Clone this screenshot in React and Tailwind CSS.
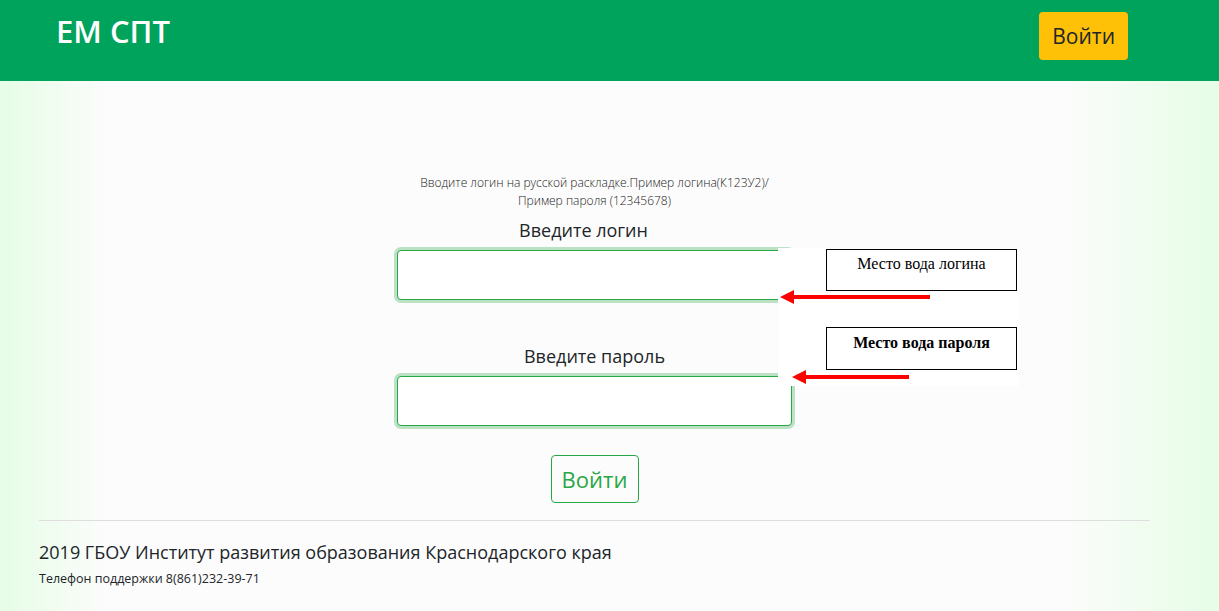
import React from 'react';

const Annotation = () => (
  <div className="absolute left-[778px] top-[248px] w-[241px] h-[138px] bg-white">
    <div className="absolute left-[48px] top-[1px] w-[191px] h-[42px] border border-black flex justify-center pt-[6px] text-[16px] leading-none text-black font-['Liberation_Serif',serif]">
      Место вода логина
    </div>
    <div className="absolute left-[48px] top-[79px] w-[191px] h-[43px] border border-black flex justify-center pt-[7px] text-[16px] leading-none font-bold text-black font-['Liberation_Serif',serif]">
      Место вода пароля
    </div>
    <svg className="absolute left-0 top-0" width="241" height="138" viewBox="0 0 241 138">
      <line x1="152" y1="49" x2="14" y2="49" stroke="#ff0000" strokeWidth="4" />
      <polygon points="2,49 16,42 16,56" fill="#ff0000" />
      <line x1="131" y1="129" x2="26" y2="129" stroke="#ff0000" strokeWidth="4" />
      <polygon points="14,129 28,122 28,136" fill="#ff0000" />
    </svg>
  </div>
);

export default function App() {
  return (
    <div className="relative min-h-[611px] font-['Open_Sans',sans-serif] text-[#212529] bg-[linear-gradient(to_right,#e6fde6_0%,#fcfcfc_9%,#fcfcfc_87%,#e6fde6_100%)]">
      <header className="h-[81px] bg-[#00a35c] flex items-start justify-between pl-[56px] pr-[91px]">
        <div className="text-white text-[31px] font-semibold leading-none mt-[16px]">ЕМ СПТ</div>
        <button className="mt-[12px] h-[48px] px-[13px] rounded bg-[#ffc107] text-[#212529] text-[21px] leading-none">
          Войти
        </button>
      </header>

      <main className="ml-[39px] w-[1111px] flex flex-col">
        <div className="flex flex-col items-center pt-[93px]">
          <p className="text-[12px] leading-[18px] text-[#222] text-center font-light">
            Вводите логин на русской раскладке.Пример логина(К123У2)/
            <br />
            Пример пароля (12345678)
          </p>
          <div className="w-[395px] flex flex-col items-center mt-[8px]">
            <label className="text-[18px] leading-[24px] mr-[22px]">Введите логин</label>
            <input className="mt-[8px] w-[395px] h-[50px] bg-white border border-[#28a745] rounded outline-none shadow-[0_0_0_3px_rgba(40,167,69,0.3)]" />
            <label className="text-[18px] leading-[24px] mt-[44px]">Введите пароль</label>
            <input className="mt-[8px] w-[395px] h-[50px] bg-white border border-[#28a745] rounded outline-none shadow-[0_0_0_3px_rgba(40,167,69,0.3)]" />
            <button className="mt-[29px] w-[88px] h-[48px] border border-[#28a745] rounded text-[#28a745] text-[22px] leading-none bg-transparent">
              Войти
            </button>
          </div>
        </div>
        <hr className="mt-[17px] border-0 border-t border-[#dedede]" />
        <div className="pt-[19px] text-[18px] leading-[24px]">2019 ГБОУ Институт развития образования Краснодарского края</div>
        <div className="mt-[7px] text-[12.5px] leading-[16px]">Телефон поддержки 8(861)232-39-71</div>
      </main>

      <Annotation />
    </div>
  );
}
